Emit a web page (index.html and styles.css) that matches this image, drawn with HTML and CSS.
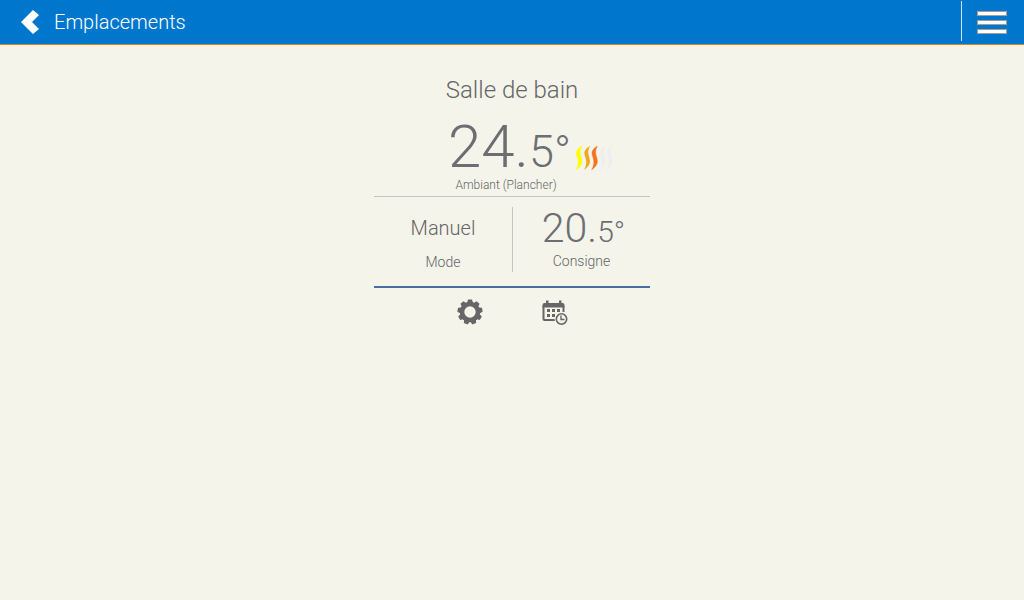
FILE: index.html
```html
<!DOCTYPE html>
<html lang="fr">
<head>
    <meta charset="UTF-8">
    <meta name="viewport" content="width=device-width, initial-scale=1.0">
    <title>Salle de bain</title>
    <link rel="stylesheet" href="styles.css">
</head>
<body>
    <header class="topbar">
        <a class="back-link" href="#">
            <svg class="back-icon" width="20" height="26" viewBox="0 0 20 26" aria-hidden="true">
                <path d="M13 1 L19 6 L12 13 L19 20 L13 25 L1 13 Z" fill="#fff"/>
            </svg>
            <span>Emplacements</span>
        </a>
        <button class="menu-btn" type="button" aria-label="Menu">
            <svg width="30" height="23" viewBox="0 0 30 23" aria-hidden="true">
                <g fill="#fff" stroke="#a39d98" stroke-width="1">
                    <rect x="0.5" y="0.5" width="29" height="4"/>
                    <rect x="0.5" y="9.5" width="29" height="4"/>
                    <rect x="0.5" y="18.5" width="29" height="4"/>
                </g>
            </svg>
        </button>
    </header>

    <main class="thermostat">
        <h1 class="room-name">Salle de bain</h1>

        <section class="ambient">
            <div class="ambient-row">
                <div class="ambient-temp">24.<span class="decimal">5°</span></div>
                <!-- Heating level, 3 out of 5 -->
                <svg class="heat-level" width="38" height="26" viewBox="0 0 38 26" aria-hidden="true">
                    <defs>
                        <path id="wave" d="M7 0 C3 2 1 5 1.5 8 C2 12 5.5 16 1 24 C4 22 7 19 7 15 C7 11 3 7 7 0 Z"/>
                    </defs>
                    <use href="#wave" x="0" fill="#ffff00" stroke="#ffff00" stroke-width="0.4"/>
                    <use href="#wave" x="8" fill="#f0a820"/>
                    <use href="#wave" x="15.5" fill="#f47521" stroke="#f47521" stroke-width="0.3"/>
                    <use href="#wave" x="23.5" fill="#eeeeee"/>
                    <use href="#wave" x="30.5" fill="#eeeeee"/>
                </svg>
            </div>
            <p class="ambient-label">Ambiant (Plancher)</p>
        </section>

        <section class="settings">
            <button class="setting mode" type="button">
                <span class="mode-value">Manuel</span>
                <span class="setting-label">Mode</span>
            </button>
            <button class="setting setpoint" type="button">
                <span class="setpoint-value">20.<span class="decimal">5°</span></span>
                <span class="setting-label">Consigne</span>
            </button>
        </section>

        <nav class="actions">
            <button class="icon-btn" type="button" aria-label="Réglages">
                <svg width="26" height="26" viewBox="-13 -13 26 26" aria-hidden="true">
                    <g fill="#666">
                        <path id="tooth" d="M-3 -9 L-2 -12.5 H2 L3 -9 Z"/>
                        <use href="#tooth" transform="rotate(40)"/>
                        <use href="#tooth" transform="rotate(80)"/>
                        <use href="#tooth" transform="rotate(120)"/>
                        <use href="#tooth" transform="rotate(160)"/>
                        <use href="#tooth" transform="rotate(200)"/>
                        <use href="#tooth" transform="rotate(240)"/>
                        <use href="#tooth" transform="rotate(280)"/>
                        <use href="#tooth" transform="rotate(320)"/>
                        <circle r="10.3"/>
                    </g>
                    <circle r="5.7" fill="#f4f4eb"/>
                </svg>
            </button>
            <button class="icon-btn" type="button" aria-label="Horaire">
                <svg width="26" height="26" viewBox="0 0 26 26" aria-hidden="true">
                    <g fill="#666">
                        <path d="M2.5 4 H4 V1.500 H6.500 V4 H17 V1.500 H19.500 V4 H20.500 Q22.500 4 22.500 6 V8.500 H0.500 V6 Q0.500 4 2.500 4 Z"/>
                        <path d="M0.5 7 H2.5 V20 H13 V22 H2.5 Q0.5 22 0.5 20 Z"/>
                        <path d="M20.5 7 H22.5 V13 H20.5 Z"/>
                        <path d="M5 10 H8 V13 H5 Z M10 10 H13 V13 H10 Z M15 10 H18 V13 H15 Z M5 15 H8 V18 H5 Z M10 15 H13 V18 H10 Z"/>
                    </g>
                    <circle cx="19.5" cy="20" r="7" fill="#f4f4eb"/>
                    <circle cx="19.5" cy="20" r="5.2" fill="none" stroke="#666" stroke-width="1.6"/>
                    <path d="M19 16.5 V20.5 H22.5" fill="none" stroke="#666" stroke-width="1.4"/>
                </svg>
            </button>
        </nav>
    </main>
</body>
</html>
```
FILE: styles.css
```css
/* Global Styles */
* {
    box-sizing: border-box;
}

body {
    margin: 0;
    background-color: #f4f4eb;
    color: #666;
    font-family: Roboto, sans-serif;
    font-weight: 300;
}

button {
    padding: 0;
    border: none;
    background: none;
    color: inherit;
    font: inherit;
    cursor: pointer;
}

svg {
    display: block;
}

/* Header */
.topbar {
    display: flex;
    justify-content: space-between;
    align-items: flex-start;
    height: 45px;
    background-color: #0077cc;
    border-bottom: 1px solid #d8841c;
}

.back-link {
    display: flex;
    align-items: center;
    gap: 14px;
    height: 44px;
    padding-left: 20px;
    color: white;
    font-size: 20px;
    text-decoration: none;
}

.menu-btn {
    margin-top: 1px;
    height: 40px;
    padding: 2px 17px 0 15px;
    border-left: 1px solid #cce4f5;
}

/* Thermostat */
.thermostat {
    max-width: 276px;
    margin: 0 auto;
    padding-top: 30px;
    text-align: center;
}

.room-name {
    margin: 0;
    font-size: 24px;
    font-weight: 300;
    line-height: 30px;
}

.ambient {
    padding: 15px 0 4px;
    border-bottom: 1px solid #c4c4c4;
}

.ambient-row {
    display: flex;
    align-items: flex-end;
    justify-content: center;
    gap: 4px;
    padding-left: 37px;
}

.ambient-temp {
    color: #6d6e71;
    font-size: 60px;
    line-height: 53px;
}

.ambient-temp .decimal {
    font-size: 45px;
}

.heat-level {
    margin-bottom: 6px;
}

.ambient-label {
    margin: 0;
    padding-right: 12px;
    font-size: 12px;
    line-height: 14px;
}

/* Mode and setpoint */
.settings {
    display: grid;
    grid-template-columns: 1fr 1fr;
    padding: 10px 0 14px;
    border-bottom: 2px solid #4a6f9b;
}

.setting {
    display: flex;
    flex-direction: column;
    justify-content: space-between;
    align-items: center;
    height: 65px;
}

.mode {
    padding-top: 9px;
}

.setpoint {
    padding-bottom: 1px;
    border-left: 1px solid #c4c4c4;
}

.mode-value {
    font-size: 20px;
    line-height: 24px;
}

.setpoint-value {
    padding-left: 4px;
    color: #6d6e71;
    font-size: 41px;
    line-height: 42px;
}

.setpoint-value .decimal {
    font-size: 30px;
    line-height: 30px;
}

.setting-label {
    font-size: 14px;
    line-height: 20px;
}

/* Bottom icons */
.actions {
    display: flex;
    justify-content: center;
    gap: 59px;
    padding-top: 11px;
}
```
